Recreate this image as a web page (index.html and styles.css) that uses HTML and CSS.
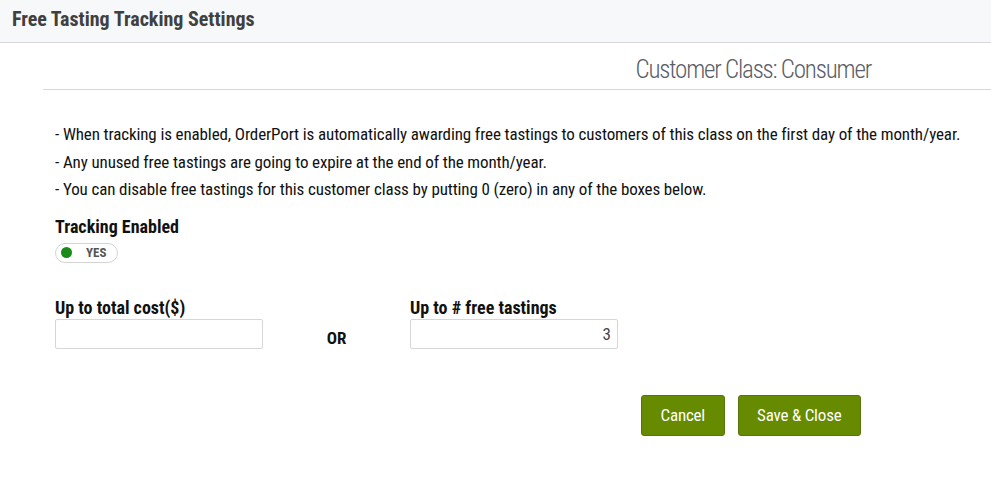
FILE: index.html
```html
<!DOCTYPE html>
<html lang="en">
<head>
    <meta charset="UTF-8">
    <title>Free Tasting Tracking Settings</title>
    <link rel="stylesheet" href="styles.css">
</head>
<body>

    <!-- Dialog Header -->
    <div class="dialog-header">
        <h2 class="dialog-title">Free Tasting Tracking Settings</h2>
    </div>

    <div class="dialog-body">
        <div class="class-bar">
            <span class="class-name">Customer Class: Consumer</span>
        </div>

        <div class="content">
            <ul class="notes">
                <li>- When tracking is enabled, OrderPort is automatically awarding free tastings to customers of this class on the first day of the month/year.</li>
                <li>- Any unused free tastings are going to expire at the end of the month/year.</li>
                <li>- You can disable free tastings for this customer class by putting 0 (zero) in any of the boxes below.</li>
            </ul>

            <div class="field-label">Tracking Enabled</div>
            <div class="toggle">
                <span class="toggle-dot"></span>
                <span class="toggle-text">YES</span>
            </div>

            <div class="limits">
                <div class="limit">
                    <label class="field-label" for="total-cost">Up to total cost($)</label>
                    <input type="text" id="total-cost" class="text-input">
                </div>
                <div class="or">OR</div>
                <div class="limit">
                    <label class="field-label" for="free-count">Up to # free tastings</label>
                    <input type="text" id="free-count" class="text-input num" value="3">
                </div>
            </div>

            <div class="actions">
                <button class="btn">Cancel</button>
                <button class="btn">Save &amp; Close</button>
            </div>
        </div>
    </div>

</body>
</html>
```

FILE: styles.css
```css
/* Global */
body {
    margin: 0;
    padding: 0;
    font-family: 'Roboto Condensed', 'DejaVu Sans Condensed', sans-serif;
    background: #fff;
    color: #111;
}

/* Header */
.dialog-header {
    height: 43px;
    background: #f7f8fa;
    border-bottom: 1px solid #d6d8de;
    box-sizing: border-box;
    padding: 0 12px 5px;
    display: flex;
    align-items: center;
}

.dialog-title {
    margin: 0;
    font-size: 20px;
    font-weight: bold;
    color: #404040;
}

/* Customer class bar */
.dialog-body {
    padding-left: 43px;
}

.class-bar {
    height: 47px;
    border-bottom: 1px solid #d6d8de;
    display: flex;
    justify-content: flex-end;
    align-items: center;
    padding-right: 120px;
    padding-top: 6px;
    box-sizing: border-box;
}

.class-name {
    font-size: 25px;
    font-weight: 300;
    letter-spacing: -1.2px;
    color: #5a5e68;
}

.content {
    padding: 31px 0 0 12px;
}

.notes {
    list-style: none;
    margin: 0;
    padding: 0;
    font-size: 17px;
    letter-spacing: -0.12px;
}

.notes li {
    line-height: 27.5px;
}

.field-label {
    display: block;
    font-size: 18px;
    font-weight: bold;
    color: #111;
}

.content > .field-label {
    margin-top: 12px;
}

/* Toggle */
.toggle {
    margin-top: 6px;
    width: 63px;
    height: 20px;
    box-sizing: border-box;
    border: 1px solid #d4d4d4;
    border-radius: 10px;
    display: flex;
    align-items: center;
    padding-left: 5px;
}

.toggle-dot {
    width: 11px;
    height: 11px;
    border-radius: 50%;
    background: #1a8a1a;
}

.toggle-text {
    margin-left: 14px;
    font-size: 13px;
    font-weight: bold;
    color: #555;
}

/* Limits */
.limits {
    margin-top: 34px;
    display: flex;
    align-items: flex-end;
}

.limit .field-label {
    margin-bottom: 1px;
}

.text-input {
    display: block;
    width: 208px;
    height: 30px;
    box-sizing: border-box;
    border: 1px solid #d4d6da;
    border-radius: 2px;
    font-family: inherit;
    font-size: 17px;
    padding: 0 6px 0 8px;
    color: #444;
    outline: none;
}

.text-input.num {
    text-align: right;
}

.or {
    width: 147px;
    text-align: center;
    font-size: 17px;
    font-weight: bold;
    padding-bottom: 1px;
}

/* Buttons */
.actions {
    margin-top: 46px;
    display: flex;
    gap: 13px;
    padding-left: 586px;
}

.btn {
    background: #668a00;
    color: #fff;
    border: 1px solid #55740a;
    border-radius: 3px;
    font-family: inherit;
    font-size: 17px;
    letter-spacing: -0.2px;
    height: 41px;
    padding: 0 18.5px;
    cursor: pointer;
}

.btn:hover {
    background: #577700;
}
```
